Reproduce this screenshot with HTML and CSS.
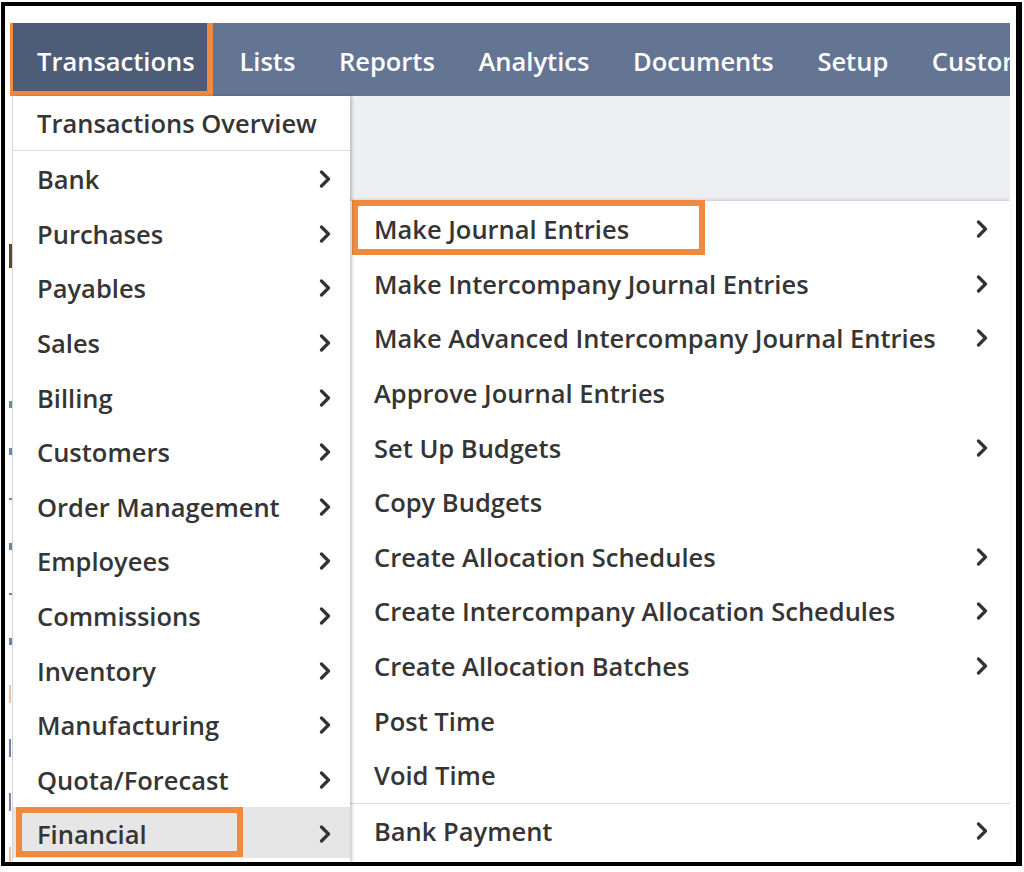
FILE: index.html
```html
<!DOCTYPE html>
<html lang="en">
<head>
<meta charset="utf-8">
<title>Transactions menu</title>
<link rel="stylesheet" href="styles.css">
</head>
<body>
<div class="frame">
  <nav class="navbar">
    <div class="nav-item active annotated">Transactions</div>
    <div class="nav-item">Lists</div>
    <div class="nav-item">Reports</div>
    <div class="nav-item">Analytics</div>
    <div class="nav-item">Documents</div>
    <div class="nav-item">Setup</div>
    <div class="nav-item">Customization</div>
  </nav>
  <div class="main">
    <div class="page-edge">
      <span class="frag bar dark"></span>
      <span class="frag dot blue"></span>
      <span class="frag dot blue"></span>
      <span class="frag dash blue"></span>
      <span class="frag dot blue"></span>
      <span class="frag dash blue"></span>
      <span class="frag dot blue"></span>
      <span class="frag bar peach"></span>
      <span class="frag bar blue"></span>
      <span class="frag bar purple"></span>
      <span class="frag bar peach"></span>
    </div>
    <ul class="dropdown">
      <li class="menu-item overview">Transactions Overview</li>
      <li class="menu-item">Bank<svg class="chev" viewBox="0 0 12 18"><polyline points="2.5,2 9.5,9 2.5,16"/></svg></li>
      <li class="menu-item">Purchases<svg class="chev" viewBox="0 0 12 18"><polyline points="2.5,2 9.5,9 2.5,16"/></svg></li>
      <li class="menu-item">Payables<svg class="chev" viewBox="0 0 12 18"><polyline points="2.5,2 9.5,9 2.5,16"/></svg></li>
      <li class="menu-item">Sales<svg class="chev" viewBox="0 0 12 18"><polyline points="2.5,2 9.5,9 2.5,16"/></svg></li>
      <li class="menu-item">Billing<svg class="chev" viewBox="0 0 12 18"><polyline points="2.5,2 9.5,9 2.5,16"/></svg></li>
      <li class="menu-item">Customers<svg class="chev" viewBox="0 0 12 18"><polyline points="2.5,2 9.5,9 2.5,16"/></svg></li>
      <li class="menu-item">Order Management<svg class="chev" viewBox="0 0 12 18"><polyline points="2.5,2 9.5,9 2.5,16"/></svg></li>
      <li class="menu-item">Employees<svg class="chev" viewBox="0 0 12 18"><polyline points="2.5,2 9.5,9 2.5,16"/></svg></li>
      <li class="menu-item">Commissions<svg class="chev" viewBox="0 0 12 18"><polyline points="2.5,2 9.5,9 2.5,16"/></svg></li>
      <li class="menu-item">Inventory<svg class="chev" viewBox="0 0 12 18"><polyline points="2.5,2 9.5,9 2.5,16"/></svg></li>
      <li class="menu-item">Manufacturing<svg class="chev" viewBox="0 0 12 18"><polyline points="2.5,2 9.5,9 2.5,16"/></svg></li>
      <li class="menu-item">Quota/Forecast<svg class="chev" viewBox="0 0 12 18"><polyline points="2.5,2 9.5,9 2.5,16"/></svg></li>
      <li class="menu-item hover"><span class="annotated fin-label">Financial</span><svg class="chev" viewBox="0 0 12 18"><polyline points="2.5,2 9.5,9 2.5,16"/></svg></li>
    </ul>
    <div class="right-col">
      <div class="page-bg"></div>
      <ul class="submenu">
        <li class="menu-item"><span class="annotated mje-label">Make Journal Entries</span><svg class="chev" viewBox="0 0 12 18"><polyline points="2.5,2 9.5,9 2.5,16"/></svg></li>
        <li class="menu-item">Make Intercompany Journal Entries<svg class="chev" viewBox="0 0 12 18"><polyline points="2.5,2 9.5,9 2.5,16"/></svg></li>
        <li class="menu-item">Make Advanced Intercompany Journal Entries<svg class="chev" viewBox="0 0 12 18"><polyline points="2.5,2 9.5,9 2.5,16"/></svg></li>
        <li class="menu-item">Approve Journal Entries</li>
        <li class="menu-item">Set Up Budgets<svg class="chev" viewBox="0 0 12 18"><polyline points="2.5,2 9.5,9 2.5,16"/></svg></li>
        <li class="menu-item">Copy Budgets</li>
        <li class="menu-item">Create Allocation Schedules<svg class="chev" viewBox="0 0 12 18"><polyline points="2.5,2 9.5,9 2.5,16"/></svg></li>
        <li class="menu-item">Create Intercompany Allocation Schedules<svg class="chev" viewBox="0 0 12 18"><polyline points="2.5,2 9.5,9 2.5,16"/></svg></li>
        <li class="menu-item">Create Allocation Batches<svg class="chev" viewBox="0 0 12 18"><polyline points="2.5,2 9.5,9 2.5,16"/></svg></li>
        <li class="menu-item">Post Time</li>
        <li class="menu-item">Void Time</li>
        <li class="menu-item bank-payment">Bank Payment<svg class="chev" viewBox="0 0 12 18"><polyline points="2.5,2 9.5,9 2.5,16"/></svg></li>
      </ul>
    </div>
  </div>
</div>
</body>
</html>
```

FILE: styles.css
```css
* { box-sizing: border-box; }

html, body {
  margin: 0;
  padding: 0;
  background: #ffffff;
}

body {
  font-family: "Open Sans", "Noto Sans", "Liberation Sans", sans-serif;
  color: #333333;
}

.frame {
  position: relative;
  margin: 2px 0 0 1px;
  width: 1021px;
  height: 864px;
  border: 4px solid #000000;
  border-right-width: 6px;
  padding: 17px 6px 0 0;
  background: #ffffff;
  display: flex;
  flex-direction: column;
  overflow: hidden;
}

/* ---------- top navigation ---------- */
.navbar {
  display: flex;
  align-items: stretch;
  height: 73px;
  margin-left: 5px;
  background: #637592;
  flex: none;
  overflow: hidden;
  white-space: nowrap;
}

.nav-item {
  position: relative;
  display: flex;
  align-items: center;
  padding: 2px 21.8px 0 21.8px;
  color: #ffffff;
  font-size: 25.5px;
  font-weight: 600;
}

.nav-item.active {
  background: #4d5c77;
  padding-left: 27px;
  padding-right: 13px;
  margin-right: 10px;
}

/* orange annotation boxes */
.annotated::after {
  content: "";
  position: absolute;
  border: 6px solid #f08a3e;
  pointer-events: none;
}

.nav-item.annotated::after {
  left: -3px;
  top: -8px;
  right: -5px;
  bottom: -1px;
}

/* ---------- main area ---------- */
.main {
  flex: 1;
  display: flex;
  min-height: 0;
}

.page-edge {
  width: 7px;
  flex: none;
  display: flex;
  flex-direction: column;
  overflow: hidden;
  padding-top: 148px;
  padding-left: 4px;
}

.frag { display: block; flex: none; }
.frag.bar { width: 2px; height: 18px; margin-bottom: 36px; }
.frag.bar.dark { width: 3px; height: 24px; margin-bottom: 133px; background: #5a4a2a; }
.frag.dot { width: 3px; height: 7px; margin-bottom: 40px; }
.frag.dash { width: 3px; height: 2px; margin-bottom: 43px; margin-top: 3px; }
.frag.blue { background: #6d84b8; }
.frag.peach { background: #ecc1ab; }
.frag.purple { background: #8a7cbc; }

.dropdown {
  list-style: none;
  margin: 0;
  padding: 0;
  width: 338px;
  flex: none;
  background: #ffffff;
  border-left: 1px solid #d6d6d6;
  box-shadow: 2px 0 3px rgba(0, 0, 0, 0.22);
  position: relative;
  z-index: 2;
}

.menu-item {
  display: flex;
  align-items: center;
  justify-content: space-between;
  height: 54.6px;
  font-size: 25.5px;
  font-weight: 600;
  color: #353535;
  white-space: nowrap;
}

.dropdown .menu-item {
  padding: 0 19px 0 24px;
}

.dropdown .menu-item.overview {
  height: 55px;
  border-bottom: 1px solid #dcdcdc;
  margin-bottom: 1px;
}

.dropdown .menu-item.hover {
  background: #e6e6e6;
  height: 51px;
  padding-top: 3px;
}

.chev {
  width: 12px;
  height: 18px;
  flex: none;
}
.chev polyline {
  fill: none;
  stroke: #333333;
  stroke-width: 3.2;
  stroke-linecap: round;
  stroke-linejoin: round;
}

.fin-label, .mje-label { position: relative; }

.fin-label::after {
  left: -21px;
  top: -10px;
  right: -96px;
  bottom: -6px;
}

.mje-label::after {
  left: -22px;
  top: -12px;
  right: -76px;
  bottom: -9px;
}

/* ---------- right column ---------- */
.right-col {
  flex: 1;
  display: flex;
  flex-direction: column;
  min-width: 0;
}

.page-bg {
  height: 105px;
  flex: none;
  background: #eeeff3;
}

.submenu {
  list-style: none;
  margin: 0;
  padding: 1px 0 0 0;
  flex: 1;
  background: #ffffff;
  box-shadow: -1px -1px 3px rgba(0, 0, 0, 0.18);
  position: relative;
  z-index: 1;
}

.submenu .menu-item {
  padding: 0 22px 0 24px;
}

.submenu .menu-item.bank-payment {
  border-top: 1px solid #d9d9d9;
  height: 56px;
}
```
